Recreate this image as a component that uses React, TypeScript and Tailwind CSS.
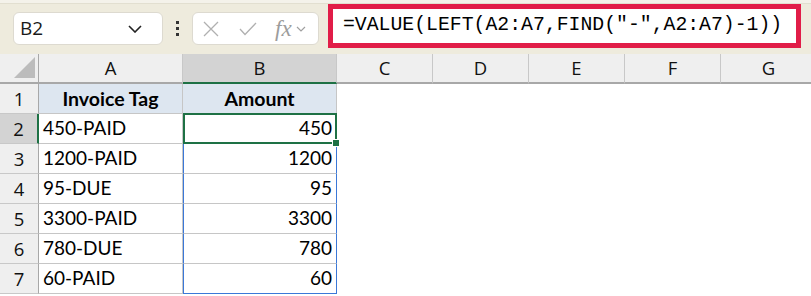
import React from "react";

const cellFont = { fontFamily: "Lato, 'Open Sans', sans-serif" };

const rows: [string, string][] = [
  ["450-PAID", "450"],
  ["1200-PAID", "1200"],
  ["95-DUE", "95"],
  ["3300-PAID", "3300"],
  ["780-DUE", "780"],
  ["60-PAID", "60"],
];

const cols = ["C", "D", "E", "F", "G"];

export default function App() {
  return (
    <div className="w-[811px] h-[296px] overflow-hidden bg-white relative font-['Open_Sans',sans-serif]">
      {/* toolbar */}
      <div className="h-[54px] bg-[#eeebdd] relative flex items-start">
        <div className="absolute left-0 top-0 w-full h-[4px] bg-[#f4f2ea] border-b border-[#e2dfd0]" />
        <div className="ml-[13px] mt-[12px] w-[150px] h-[33px] bg-white rounded-[6px] border border-[#dddad0] flex items-center pl-[6px] pr-[20px] justify-between">
          <span className="text-[19px] text-[#1a1a1a] leading-none">B2</span>
          <svg width="14" height="8" viewBox="0 0 14 8" fill="none">
            <path d="M1 1 L7 7 L13 1" stroke="#222" strokeWidth="1.6" />
          </svg>
        </div>
        <div className="ml-[13px] mt-[21px] flex flex-col gap-[3px]">
          <div className="w-[3px] h-[3px] bg-[#333]" />
          <div className="w-[3px] h-[3px] bg-[#333]" />
          <div className="w-[3px] h-[3px] bg-[#333]" />
        </div>
        <div className="ml-[13px] mt-[12px] w-[127px] h-[33px] bg-white rounded-[6px] border border-[#dddad0] flex items-center">
          <svg className="ml-[10px]" width="16" height="16" viewBox="0 0 16 16" fill="none">
            <path d="M1 1 L15 15 M15 1 L1 15" stroke="#b0b0b0" strokeWidth="1.3" />
          </svg>
          <svg className="ml-[20px]" width="18" height="14" viewBox="0 0 18 14" fill="none">
            <path d="M1 7 L6 12.5 L17 1" stroke="#b0b0b0" strokeWidth="1.3" />
          </svg>
          <span className="ml-[18px] text-[23px] italic text-[#9c9c9c] leading-none font-['Liberation_Serif',serif]">fx</span>
          <svg className="ml-[4px]" width="10" height="6" viewBox="0 0 10 6" fill="none">
            <path d="M1 1 L5 5 L9 1" stroke="#a0a0a0" strokeWidth="1.2" />
          </svg>
        </div>
        <div className="ml-[9px] mt-[4px] w-[473px] h-[44px] border-[5px] border-[#e11d48] bg-white flex items-center pl-[10px]">
          <span className="text-[19.8px] text-black leading-none font-['Liberation_Mono',monospace] whitespace-nowrap">
            =VALUE(LEFT(A2:A7,FIND("-",A2:A7)-1))
          </span>
        </div>
      </div>

      {/* grid */}
      <div className="grid grid-cols-[39px_144px_154px_96px_96px_96px_96px_96px] grid-rows-[30px_30px_30px_30px_30px_30px_30px_30px] relative">
        {/* header row */}
        <div className="bg-[#efefef] border-r border-b-2 border-[#a8a8a8] relative">
          <div className="absolute right-[3px] bottom-[4px] w-0 h-0 border-l-[21px] border-l-transparent border-b-[21px] border-b-[#bcbcbc]" />
        </div>
        <div className="bg-[#efefef] border-r border-[#c8c8c8] border-b-2 border-b-[#a8a8a8] flex items-center justify-center text-[18.5px] text-[#111]">A</div>
        <div className="bg-[#d3d3d3] border-r border-[#c8c8c8] border-b-2 border-b-[#1e7145] flex items-center justify-center text-[18.5px] text-[#111]">B</div>
        {cols.map((c) => (
          <div key={c} className="bg-[#efefef] border-r border-[#c8c8c8] border-b-2 border-b-[#a8a8a8] flex items-center justify-center text-[18.5px] text-[#111]">{c}</div>
        ))}

        {/* row 1 */}
        <div className="bg-[#efefef] border-r border-r-[#a8a8a8] border-b border-b-[#c8c8c8] flex items-center justify-center text-[18.5px] text-[#111]">1</div>
        <div style={cellFont} className="bg-[#dde6f0] border-r border-b border-[#c6c6c6] flex items-center justify-center text-[19.5px] font-bold text-black">Invoice Tag</div>
        <div style={cellFont} className="bg-[#dde6f0] border-r border-b border-[#c6c6c6] flex items-center justify-center text-[19.5px] font-bold text-black">Amount</div>
        {cols.map((c) => (
          <div key={c} />
        ))}

        {rows.map(([a, b], i) => {
          const r = i + 2;
          const selected = r === 2;
          return (
            <React.Fragment key={r}>
              <div
                className={
                  selected
                    ? "bg-[#d3d3d3] border-r-2 border-r-[#1e7145] border-b border-b-[#c8c8c8] flex items-center justify-center text-[18.5px] text-[#111]"
                    : "bg-[#efefef] border-r border-r-[#a8a8a8] border-b border-b-[#c8c8c8] flex items-center justify-center text-[18.5px] text-[#111]"
                }
              >
                {r}
              </div>
              <div style={cellFont} className="border-r border-b border-[#c6c6c6] flex items-center pl-[4px] text-[19px] text-black">{a}</div>
              <div
                style={cellFont}
                className={
                  selected
                    ? "relative border-2 border-[#1e7145] -mt-px flex items-center justify-end pr-[3px] text-[19px] text-black"
                    : r === 7
                    ? "border-l border-r border-b border-l-[#3b78d8] border-r-[#3b78d8] border-b-[#3b78d8] flex items-center justify-end pr-[4px] text-[19px] text-black"
                    : "border-l border-r border-l-[#3b78d8] border-r-[#3b78d8] border-b border-b-[#c6c6c6] flex items-center justify-end pr-[4px] text-[19px] text-black"
                }
              >
                {b}
                {selected && (
                  <div className="absolute right-[-5px] bottom-[-5px] w-[8px] h-[8px] bg-[#1e7145] border border-white" />
                )}
              </div>
              {cols.map((c) => (
                <div key={c} />
              ))}
            </React.Fragment>
          );
        })}
      </div>
    </div>
  );
}
